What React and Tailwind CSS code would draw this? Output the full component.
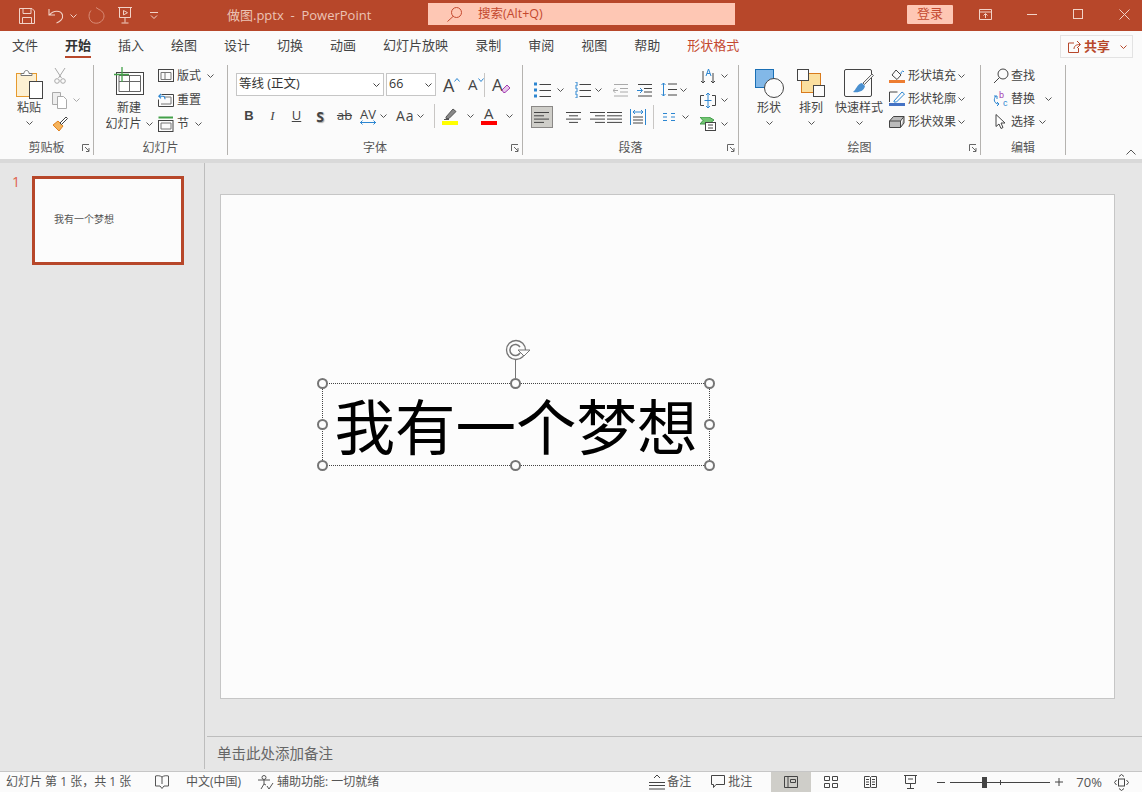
const TABS = ["文件", "开始", "插入", "绘图", "设计", "切换", "动画", "幻灯片放映", "录制", "审阅", "视图", "帮助"];

function Chev({ c = "#555", className = "" }) {
  return (
    <svg width="7" height="4" viewBox="0 0 7 4" className={`shrink-0 ${className}`}>
      <path d="M.5.5l3 3 3-3" fill="none" stroke={c} />
    </svg>
  );
}

function Ico({ w = 16, h = 16, children, className = "" }) {
  return (
    <svg width={w} height={h} viewBox={`0 0 ${w} ${h}`} fill="none" className={`shrink-0 ${className}`}>
      {children}
    </svg>
  );
}

function Launcher() {
  return (
    <Ico w={8} h={8} className="absolute right-[3px] top-[4px]">
      <path d="M.5 7V.5H7M3 3l4 4M7 4v3.5H4" stroke="#666" />
    </Ico>
  );
}

function Group({ w, label, launcher, children }) {
  return (
    <div className={`flex flex-col h-[90px] shrink-0 border-r border-[#b5b3b0] ${w}`}>
      <div className="flex h-[75px]">{children}</div>
      <div className="relative h-[15px] flex items-center justify-center text-[12px] leading-none text-[#555]">
        {label}
        {launcher ? <Launcher /> : null}
      </div>
    </div>
  );
}

function Big({ w, icon, lines, chev = true }) {
  return (
    <div className={`flex flex-col items-center shrink-0 ${w}`}>
      <div className="h-[35px] pt-[4px] flex justify-center">{icon}</div>
      {lines.map((l, i) => (
        <div key={i} className="h-[16px] flex items-center text-[12px] leading-none whitespace-nowrap">{l}</div>
      ))}
      {chev ? <div className="h-[14px] flex items-center"><Chev /></div> : null}
    </div>
  );
}

function Small({ icon, label, gap = "mr-[3px]", chev = "ml-[6px]", h = "h-[24px]" }) {
  return (
    <div className={`flex items-center text-[12px] leading-none whitespace-nowrap ${h}`}>
      <span className={`flex ${gap}`}>{icon}</span>
      {label}
      {chev ? <Chev className={chev} /> : null}
    </div>
  );
}

function Lines({ rows, c = "#444" }) {
  return (
    <Ico w={16} h={13}>
      {rows.map(([a, b], i) => (
        <path key={i} d={`M${a} ${1.5 + i * 3.3}H${b}`} stroke={c} />
      ))}
    </Ico>
  );
}

function PasteIcon() {
  return (
    <Ico w={30} h={30}>
      <rect x="2.5" y="4.5" width="20" height="23" fill="#fdf0d2" stroke="#e69a2e" />
      <path d="M7 6.5V4.5h3c0-4 5-4 5 0h3v2z" fill="#fff" stroke="#777" />
      <rect x="15.5" y="12.5" width="13" height="17" fill="#fff" stroke="#444" />
    </Ico>
  );
}

function NewSlideIcon() {
  return (
    <Ico w={30} h={28}>
      <rect x="2.5" y="5.5" width="27" height="22" stroke="#444" fill="#fff" />
      <path d="M5 8.5h21.5v16H5zM15.5 8.5v16M5 14.5h21.5" stroke="#666" />
      <path d="M8 0v15M0 7.5h15" stroke="#43a049" strokeWidth="1.3" />
    </Ico>
  );
}

function SlideTitle() {
  return (
    <Ico w={16} h={14}>
      <rect x=".5" y=".5" width="15" height="12" stroke="#444" />
      <path d="M3 3.5h10M3 3.5v7h10v-7M7 3.5v7" stroke="#777" />
    </Ico>
  );
}

function ResetIcon() {
  return (
    <Ico w={16} h={14}>
      <path d="M3.5 1.5h12v12H.5v-7" stroke="#444" />
      <path d="M6 4h7v7H3" stroke="#777" />
      <path d="M3 1L.8 3.2 3 5.4M1 3.2h4c1.5 0 2 1 2 3" stroke="#2c86d1" strokeWidth="1.1" />
    </Ico>
  );
}

function SectionIcon() {
  return (
    <Ico w={16} h={16}>
      <path d="M.5 1.5h14.5" stroke="#43a049" strokeWidth="2" />
      <rect x=".5" y="4.5" width="14.5" height="11" stroke="#444" />
      <path d="M3 7h10v6H3z" stroke="#777" />
    </Ico>
  );
}

function Bullets({ numbered }) {
  return (
    <Ico w={17} h={16}>
      {[2, 8, 14].map((y) => (
        <g key={y}>
          {numbered ? (
            <path d={`M1 ${y - 2}h2v4H1`} stroke="#2c86d1" />
          ) : (
            <rect x="0" y={y - 1.5} width="3" height="3" fill="#2c86d1" />
          )}
          <path d={`M5.5 ${y + 0.5}H17`} stroke="#444" />
        </g>
      ))}
    </Ico>
  );
}

function Indent({ out }) {
  const c = out ? "#aaa" : "#444";
  return (
    <Ico w={15} h={14}>
      <path d="M1 1.5h14M7 5.5h8M7 9h8M1 13h14" stroke={c} />
      <path d={out ? "M5 7.5H0M2.5 5L0 7.5 2.5 10" : "M0 7.5h5M3 5l2.5 2.5L3 10"} stroke={out ? "#aaa" : "#2c86d1"} />
    </Ico>
  );
}

function AlignIcon({ rows }) {
  return <Lines rows={rows} />;
}

function Sep() {
  return <div className="w-px h-[24px] bg-[#c8c6c4] shrink-0" />;
}

function Titlebar() {
  const ic = "#f2d3c8";
  return (
    <div className="flex items-center h-[31px] bg-[#b7472a] shrink-0 text-[13px] text-[#ecc3b5]">
      <Ico w={16} h={16} className="ml-[19px]">
        <path d="M.5.5h12.5l2.5 2.5v12.5H.5zM4 .5v5h8v-5M3.5 15.5v-6h9v6" stroke={ic} />
      </Ico>
      <Ico w={16} h={16} className="ml-[13px]">
        <path d="M1 1v6h6M1.5 7C5 2 13 2 14.5 7c1 4-3 7-6 8" stroke={ic} strokeWidth="1.1" />
      </Ico>
      <Chev c={ic} className="ml-[6px]" />
      <Ico w={17} h={17} className="ml-[11px]">
        <path d="M11 2.5C15 4 17 8 15.5 11.5 13.500 16 8 17.500 4 15 .5 12.500 0 7 3 3.500M8 .5L11 2.500" stroke="#d98d78" />
      </Ico>
      <Ico w={14} h={17} className="ml-[13px]">
        <path d="M0 .5h14M1.500.5v10h11V.5M7 10.500v5M3.500 16h7" stroke={ic} />
        <path d="M5.500 3.500l4 2.200-4 2.200z" stroke={ic} />
      </Ico>
      <Ico w={8} h={7} className="ml-[18px]">
        <path d="M0 .5h8M1 3.500l3 3 3-3" stroke={ic} />
      </Ico>
      <div className="ml-[69px] w-[201px] whitespace-pre">做图.pptx  -  PowerPoint</div>
      <div className="flex items-center w-[307px] h-[22px] bg-[#fec7b4] text-[#c4492f] text-[12.500px] -mt-[3px]">
        <Ico w={15} h={15} className="ml-[19px]">
          <circle cx="9.500" cy="5.500" r="5" stroke="#c4492f" />
          <path d="M6 9.500L.5 14.500" stroke="#c4492f" />
        </Ico>
        <span className="ml-[16px]">搜索(Alt+Q)</span>
      </div>
      <div className="ml-[172px] flex items-center justify-center w-[46px] h-[19px] rounded-[1px] bg-[#fec7b4] text-[#c4492f] text-[13px] -mt-[3px]">登录</div>
      <Ico w={13} h={11} className="ml-[26px] -mt-[3px]">
        <path d="M.5.5h12v10H.5zM.5 3h12M6.500 9V5M4.500 6.500l2-2 2 2" stroke={ic} />
      </Ico>
      <div className="ml-[35px] w-[10px] h-px bg-[#f2d3c8] -mt-[3px]" />
      <div className="ml-[36px] w-[10px] h-[10px] border border-[#f2d3c8] -mt-[3px]" />
      <Ico w={11} h={11} className="ml-[36px] -mt-[3px]">
        <path d="M.5.500l10 10M10.500.500l-10 10" stroke={ic} />
      </Ico>
    </div>
  );
}

function Tabs() {
  return (
    <div className="flex h-[29px] pl-[12px] bg-[#fbfbfb] shrink-0 text-[13px] leading-none text-[#444] items-center gap-[27px]">
      {TABS.map((t) => (
        <div key={t} className={`relative h-full flex items-center ${t === "开始" ? "font-bold text-[#333]" : ""}`}>
          {t}
          {t === "开始" ? <div className="absolute left-0 right-0 bottom-[2px] h-[2px] bg-[#b7472a]" /> : null}
        </div>
      ))}
      <div className="text-[#c4492f]">形状格式</div>
      <div className="ml-auto mr-[9px] flex items-center w-[73px] h-[23px] border border-[#e3e3e3] text-[#b7472a] font-bold pl-[7px] mt-[2px]">
        <Ico w={13} h={13}>
          <path d="M6 3H.5v9.500h10V8M6 9c0-3 2-4.500 6-4.500M9 1l3.500 3.500L9 8" stroke="#b7472a" />
        </Ico>
        <span className="ml-[3px]">共享</span>
        <Chev c="#b7472a" className="ml-[10px]" />
      </div>
    </div>
  );
}

function Ribbon() {
  return (
    <div className="relative flex h-[99px] pt-[5px] bg-[#fbfbfb] text-[#444] shrink-0">
      <Group w="w-[94px]" label="剪贴板" launcher>
        <Big w="w-[30px] ml-[14px]" icon={<PasteIcon />} lines={["粘贴"]} />
        <div className="ml-[8px] -mt-px flex flex-col">
          <div className="h-[24px] flex items-center pl-[2px]">
            <Ico w={12} h={16}>
              <path d="M1 0l6.500 10M11 0L4.500 10" stroke="#a8a8a8" />
              <circle cx="3" cy="13" r="2.300" stroke="#a8a8a8" />
              <circle cx="9" cy="13" r="2.300" stroke="#a8a8a8" />
            </Ico>
          </div>
          <div className="h-[24px] flex items-center">
            <Ico w={16} h={17}>
              <path d="M.5.500h8v12h-8z" fill="#eee" stroke="#aaa" />
              <path d="M5.500 4.500h6l3 3v9h-9z" fill="#fff" stroke="#aaa" />
            </Ico>
            <Chev c="#aaa" className="ml-[5px]" />
          </div>
          <div className="h-[24px] flex items-center">
            <Ico w={16} h={16}>
              <path d="M1 9l5-4 5 5-4 5C5 13 3 11 1 9z" fill="#f5b35c" stroke="#e0811f" />
              <path d="M8 7l6-6 1.500 1.500-6 6z" fill="#fff" stroke="#444" />
            </Ico>
          </div>
        </div>
      </Group>

      <Group w="w-[134px]" label="幻灯片">
        <div className="ml-[10px] w-[50px] flex flex-col items-center shrink-0">
          <div className="h-[35px] pt-[2px] flex"><NewSlideIcon /></div>
          <div className="h-[16px] flex items-center text-[12px] leading-none">新建</div>
          <div className="h-[16px] flex items-center text-[12px] leading-none whitespace-nowrap">幻灯片<Chev className="ml-[4px]" /></div>
        </div>
        <div className="ml-[4px] -mt-px flex flex-col">
          <Small icon={<SlideTitle />} label="版式" />
          <Small icon={<ResetIcon />} label="重置" chev={null} />
          <Small icon={<SectionIcon />} label="节" />
        </div>
      </Group>

      <Group w="w-[295px]" label="字体" launcher>
        <div className="pl-[8px] pt-[8px] flex flex-col">
          <div className="flex items-center h-[23px]">
            <div className="flex items-center justify-between w-[148px] h-full border border-[#c6c6c6] bg-white px-[2px] text-[12.500px] text-[#333]">
              等线 (正文)<Chev c="#444" className="mr-[1px]" />
            </div>
            <div className="ml-[2px] flex items-center justify-between w-[50px] h-full border border-[#c6c6c6] bg-white px-[2px] text-[12.500px] text-[#333]">
              66<Chev c="#444" className="mr-[1px]" />
            </div>
            <div className="ml-[7px] flex items-start w-[17px] text-[18px] leading-none">A<Ico w={6} h={4} className="mt-[2px]"><path d="M.5 3.500l2.500-3 2.500 3" stroke="#2c86d1" /></Ico></div>
            <div className="ml-[8px] flex items-start w-[16px] text-[15px] leading-none">A<Ico w={6} h={4} className="mt-[1px]"><path d="M.5.500l2.500 3 2.500-3" stroke="#2c86d1" /></Ico></div>
            <Sep />
            <div className="ml-[7px] flex items-end text-[17px] leading-none">
              A
              <Ico w={10} h={9} className="-ml-[2px]"><path d="M1 6l5-5 3 3-5 4.500H2.500z" fill="#e8c8ec" stroke="#a43cb0" /></Ico>
            </div>
          </div>
          <div className="mt-[8px] h-[24px] flex items-center text-[#444]">
            <div className="w-[22px] ml-[2px] text-center text-[13px] font-bold font-['Liberation_Sans',sans-serif]">B</div>
            <div className="w-[25px] text-center text-[13px] italic font-['Liberation_Serif',serif]">I</div>
            <div className="w-[23px] text-center text-[13px] underline">U</div>
            <div className="w-[24px] text-center text-[14px] font-bold [text-shadow:1px_1px_1px_#aaa]">S</div>
            <div className="w-[25px] text-center text-[13px] line-through">ab</div>
            <div className="w-[22px] flex flex-col items-center leading-none">
              <span className="text-[13px] h-[12px] leading-[12px]">AV</span>
              <Ico w={16} h={5}><path d="M0 2.500h16M2.500.500l-2 2 2 2M13.500.500l2 2-2 2" stroke="#2c86d1" /></Ico>
            </div>
            <Chev className="ml-[1px]" />
            <div className="ml-[9px] text-[14px] tracking-[1px] leading-none">Aa</div>
            <Chev className="ml-[2px]" />
            <div className="ml-[10px]"><Sep /></div>
            <div className="ml-[7px] flex flex-col w-[16px]">
              <Ico w={16} h={12}><path d="M4 9l7-8 3 2.500-7 7H4zM2 11.500h5" fill="#888" stroke="#555" /></Ico>
              <div className="mt-[1px] h-[4px] bg-[#ffff00]" />
            </div>
            <Chev className="ml-[9px]" />
            <div className="ml-[7px] flex flex-col items-center w-[16px]">
              <span className="text-[15px] h-[13px] leading-[13px]">A</span>
              <div className="mt-[1px] w-full h-[4px] bg-[#ff0000]" />
            </div>
            <Chev className="ml-[9px]" />
          </div>
        </div>
      </Group>

      <Group w="w-[216px]" label="段落" launcher>
        <div className="pl-[8px] flex flex-col w-[175px] shrink-0">
          <div className="h-[39px] pt-[10px] flex items-center pl-[3px]">
            <Bullets />
            <Chev className="ml-[6px]" />
            <span className="ml-[10px] flex"><Bullets numbered /></span>
            <Chev className="ml-[4px]" />
            <span className="ml-[11px] flex"><Indent out /></span>
            <span className="ml-[9px] flex"><Indent /></span>
            <Ico w={24} h={15} className="ml-[9px]">
              <path d="M2.500 1v13M.5 3l2-2 2 2M.5 12l2 2 2-2" stroke="#2c86d1" />
              <path d="M7 2h9M7 7.500h9M7 13h9" stroke="#444" />
            </Ico>
            <Chev className="-ml-[5px]" />
          </div>
          <div className="mt-px h-[24px] flex items-center">
            <div className="flex items-center justify-center w-[22px] h-[22px] bg-[#cfcec9] border border-[#8a8886]">
              <AlignIcon rows={[[0, 15], [0, 10], [0, 15], [0, 10]]} />
            </div>
            <span className="ml-[13px] flex"><AlignIcon rows={[[0, 15], [3, 12], [0, 15], [3, 12]]} /></span>
            <span className="ml-[8px] flex"><AlignIcon rows={[[0, 15], [5, 15], [0, 15], [5, 15]]} /></span>
            <span className="ml-[1px] flex"><AlignIcon rows={[[0, 15], [0, 15], [0, 15], [0, 15]]} /></span>
            <Ico w={16} h={16} className="ml-[7px]">
              <path d="M.5 0v16M15.500 0v16" stroke="#2c86d1" />
              <path d="M3 3h10M5 1L3 3l2 2M11 1l2 2-2 2" stroke="#2c86d1" />
              <path d="M3 8h10M3 11h10M3 14h10" stroke="#444" />
            </Ico>
            <span className="ml-[7px] flex"><Sep /></span>
            <Ico w={12} h={8} className="ml-[9px]">
              <path d="M0 .5h4M8 .5h4M0 4h4M8 4h4M0 7.500h4M8 7.500h4" stroke="#2c86d1" />
            </Ico>
            <Chev className="ml-[7px]" />
          </div>
        </div>
        <div className="-mt-px flex flex-col ml-[2px]">
          <div className="h-[24px] flex items-center">
            <Ico w={16} h={17}>
              <path d="M3 3v12M1 13l2 2 2-2M13 5v10M11 13l2 2 2-2" stroke="#444" />
              <path d="M6 8l2.500-7L11 8M7 5.500h3" stroke="#2c86d1" />
            </Ico>
            <Chev className="ml-[5px]" />
          </div>
          <div className="h-[24px] flex items-center">
            <Ico w={16} h={15}>
              <path d="M4 2.500H.5v10H4M12 2.500h3.500v10H12" stroke="#444" />
              <path d="M8 0v15M6 2l2-2 2 2M6 13l2 2 2-2M4.500 7.500h7" stroke="#2c86d1" />
            </Ico>
            <Chev className="ml-[5px]" />
          </div>
          <div className="h-[24px] flex items-center">
            <Ico w={16} h={14}>
              <path d="M0 0h9l5 3-5 4H0l3-3.500z" fill="#72c472" stroke="#3f9a48" />
              <rect x="5.500" y="5.500" width="10" height="8" fill="#fff" stroke="#444" />
              <path d="M8 8h5M8 11h5" stroke="#444" />
            </Ico>
            <Chev className="ml-[5px]" />
          </div>
        </div>
      </Group>

      <Group w="w-[242px]" label="绘图" launcher>
        <Big
          w="w-[30px] ml-[15px]"
          lines={["形状"]}
          icon={
            <Ico w={29} h={30}>
              <rect x=".5" y=".5" width="18" height="18" fill="#82b8e8" stroke="#1a6fb5" />
              <circle cx="19" cy="19" r="9.500" fill="#fcfcfc" stroke="#444" />
            </Ico>
          }
        />
        <Big
          w="w-[30px] ml-[12px]"
          lines={["排列"]}
          icon={
            <Ico w={29} h={30}>
              <rect x="4.500" y="4.500" width="19" height="19" fill="#fbdf9f" stroke="#d97b1c" />
              <rect x=".5" y=".5" width="11" height="11" fill="#fcfcfc" stroke="#444" />
              <rect x="16.500" y="16.500" width="11" height="11" fill="#fcfcfc" stroke="#444" />
            </Ico>
          }
        />
        <Big
          w="w-[48px] ml-[9px]"
          lines={["快速样式"]}
          icon={
            <Ico w={30} h={30}>
              <rect x=".5" y=".5" width="27" height="27" rx="1.500" fill="#fcfcfc" stroke="#444" />
              <path d="M19 14l9-9 1.500 1.500-9 9z" fill="#eee" stroke="#666" />
              <path d="M18 14l3 3c-1 5-6 7-12 6 3-2 4-8 9-9z" fill="#4a90d0" />
            </Ico>
          }
        />
        <div className="ml-[6px] -mt-[1px] flex flex-col">
          <Small
            h="h-[23px]"
            gap="mr-[3px]"
            chev="ml-[2px]"
            label="形状填充"
            icon={
              <span className="flex flex-col w-[16px]">
                <Ico w={16} h={11}><path d="M3 6l4-5 5 5-4 4.500z" stroke="#444" /><path d="M12 5c0-2 1-3 2-3l1 1" stroke="#2c86d1" /></Ico>
                <span className="h-[3px] bg-[#ed7d31]" />
              </span>
            }
          />
          <Small
            h="h-[23px]"
            gap="mr-[3px]"
            chev="ml-[2px]"
            label="形状轮廓"
            icon={
              <span className="flex flex-col w-[16px]">
                <Ico w={16} h={12}><path d="M.5 11V1h8" stroke="#444" /><path d="M5 10l8-9 2.500 2-8 8H5z" stroke="#2c86d1" /></Ico>
                <span className="h-[3px] bg-[#4472c4]" />
              </span>
            }
          />
          <Small
            h="h-[23px]"
            gap="mr-[3px]"
            chev="ml-[2px]"
            label="形状效果"
            icon={
              <Ico w={16} h={12}>
                <path d="M.5 5l4-4.500H15L11.500 5zM.5 5v6.500h11V5M11.500 11.500L15 7V.5" fill="#bbb" stroke="#444" />
              </Ico>
            }
          />
        </div>
      </Group>

      <Group w="w-[85px]" label="编辑">
        <div className="ml-[12px] -mt-[1px] flex flex-col">
          <Small
            h="h-[23px]"
            gap="mr-[2px]"
            chev={null}
            label="查找"
            icon={
              <Ico w={16} h={16}>
                <circle cx="10" cy="6" r="5" stroke="#444" />
                <path d="M6.500 9.500L1 15" stroke="#444" />
              </Ico>
            }
          />
          <Small
            h="h-[23px]"
            gap="mr-[2px]"
            chev="ml-[10px]"
            label="替换"
            icon={
              <Ico w={16} h={16}>
                <text x="6" y="7" fontSize="9" fill="#a43cb0" fontFamily="Liberation Sans">b</text>
                <text x="10" y="15" fontSize="9" fill="#2c86d1" fontFamily="Liberation Sans">c</text>
                <path d="M3 5C0 8 1 13 6 13M1 5h3V8M6 13l-2-2M6 13l-2 2" stroke="#2c86d1" />
              </Ico>
            }
          />
          <Small
            h="h-[23px]"
            gap="mr-[2px]"
            chev="ml-[4px]"
            label="选择"
            icon={
              <Ico w={16} h={16}>
                <path d="M3 .5v12l3-2.500 2 4.500 2-1-2-4.500h4z" fill="#fff" stroke="#444" />
              </Ico>
            }
          />
        </div>
      </Group>

      <Ico w={10} h={6} className="absolute right-[6px] bottom-[4px]">
        <path d="M.5 5.500L5 1l4.500 4.500" stroke="#555" />
      </Ico>
    </div>
  );
}

const HANDLES = [
  "left-[-6px] top-[-6px]",
  "left-[187px] top-[-6px]",
  "left-[381px] top-[-6px]",
  "left-[-6px] top-[35px]",
  "left-[381px] top-[35px]",
  "left-[-6px] top-[76px]",
  "left-[187px] top-[76px]",
  "left-[381px] top-[76px]",
];

function Slide() {
  return (
    <div className="relative w-[895px] h-[505px] bg-[#fcfcfc] border border-[#c6c6c6]">
      <div className="absolute left-[101px] top-[188px] w-[388px] h-[83px] border border-dotted border-[#444] flex items-center justify-center text-black text-[60.500px] leading-none whitespace-nowrap font-['Noto_Sans_CJK_SC',sans-serif]">
        我有一个梦想
        {HANDLES.map((h) => (
          <span key={h} className={`absolute w-[11px] h-[11px] rounded-full bg-[#fcfcfc] border-2 border-[#757575] ${h}`} />
        ))}
        <span className="absolute left-[192px] top-[-24px] w-px h-[18px] bg-[#757575]" />
        <Ico w={26} h={22} className="absolute left-[182px] top-[-45px]">
          <circle cx="11" cy="11" r="9.500" stroke="#757575" strokeWidth="1.300" />
          <path d="M15 8a5.500 5.500 0 1 0 0 6" stroke="#757575" strokeWidth="1.500" />
          <path d="M13 11h12l-6 6z" fill="#fcfcfc" stroke="#757575" />
        </Ico>
      </div>
    </div>
  );
}

function StatusBar() {
  return (
    <div className="flex items-center h-[21px] bg-[#fbfbfb] border-t border-[#c6c6c6] text-[12px] leading-none text-[#555] whitespace-pre shrink-0">
      <span className="ml-[6px] w-[130px]">幻灯片 第 1 张，共 1 张</span>
      <Ico w={14} h={14} className="ml-[19px]">
        <path d="M7 2C5 .5 2.500.5.5 1v10h4.500l2 2.500 2-2.500h4.500V1c-2-.5-4.500-.5-6.500 1zM7 2v7" stroke="#555" />
      </Ico>
      <span className="ml-[17px] w-[55px]">中文(中国)</span>
      <Ico w={16} h={15} className="ml-[17px]">
        <circle cx="6" cy="2.500" r="2" stroke="#555" />
        <path d="M0 5h12M6 5v4l-3 5M6 9l2 1M9 11l2 3 4-6" stroke="#555" />
      </Ico>
      <span className="ml-[3px]">辅助功能: 一切就绪</span>

      <Ico w={16} h={16} className="ml-[270px]">
        <path d="M0 8.500h16M0 11.500h16M0 15h16M5 4l3-3 3 3" stroke="#444" />
      </Ico>
      <span className="ml-[2px]">备注</span>
      <Ico w={14} h={14} className="ml-[20px]">
        <path d="M.5.500h13v9H5l-2.500 3v-3h-2z" stroke="#444" />
      </Ico>
      <span className="ml-[3px]">批注</span>
      <div className="ml-[19px] w-[40px] h-full bg-[#cfcec9] flex items-center justify-center">
        <Ico w={14} h={12}>
          <path d="M.5.500h13v11H.5zM4 .500v11M6.500 3.500h5v3h-5z" stroke="#444" />
        </Ico>
      </div>
      <Ico w={14} h={12} className="ml-[13px]">
        <path d="M.5.500h5v4h-5zM8.500.500h5v4h-5zM.5 7.500h5v4h-5zM8.500 7.500h5v4h-5z" stroke="#444" />
      </Ico>
      <Ico w={13} h={12} className="ml-[26px]">
        <path d="M.5.500h5l1 1 1-1h5v11h-5l-1-.5-1 .5h-5zM6.500 1.500V11M2 3.500h3M2 6h3M2 8.500h3M8 3.500h3M8 6h3M8 8.500h3" stroke="#444" />
      </Ico>
      <Ico w={13} h={14} className="ml-[27px]">
        <path d="M0 .5h13M1.500.5v8h10v-8M6.500 8.500v4.500M3 13.500h7M4 4h5" stroke="#444" />
      </Ico>
      <span className="ml-[20px] w-[8px] h-px bg-[#444]" />
      <div className="ml-[5px] relative w-[100px] h-px bg-[#444] flex items-center">
        <span className="absolute left-[32px] w-[5px] h-[11px] bg-[#444]" />
        <span className="absolute left-[50px] w-px h-[5px] bg-[#444]" />
      </div>
      <Ico w={8} h={8} className="ml-[5px]">
        <path d="M0 4h8M4 0v8" stroke="#444" />
      </Ico>
      <span className="ml-[13px] text-[13px]">70%</span>
      <Ico w={15} h={17} className="ml-[12px]">
        <rect x="4.500" y="5" width="6" height="7" stroke="#444" />
        <path d="M5 2.500L7.500.5 10 2.500M5 14.500l2.500 2 2.500-2M2.500 6L.5 8.500l2 2.500M12.500 6l2 2.500-2 2.500" stroke="#444" />
      </Ico>
    </div>
  );
}

export default function App() {
  return (
    <div className="flex flex-col w-[1142px] h-[792px] overflow-hidden bg-[#e6e6e6] font-['Open_Sans','Noto_Sans_CJK_SC',sans-serif]">
      <Titlebar />
      <Tabs />
      <Ribbon />
      <div className="h-[4px] bg-[#d9d9d9] shrink-0" />
      <div className="flex flex-1 min-h-0">
        <div className="flex w-[205px] shrink-0 h-[606px] border-r border-[#bdbdbd] pt-[13px]">
          <span className="ml-[12px] w-[20px] text-[14px] leading-[14px] mt-[-1px] text-[#e0604a]">1</span>
          <div className="w-[152px] h-[89px] border-[3px] border-[#b7472a] bg-[#fcfcfc] pl-[19px] pt-[34px] text-[10px] leading-[12px] text-[#555] font-['Noto_Sans_CJK_SC',sans-serif]">
            我有一个梦想
          </div>
        </div>
        <div className="flex flex-col flex-1 min-w-0 pl-[2px]">
          <div className="flex-1 pl-[13px] pt-[31px]"><Slide /></div>
          <div className="h-[35px] border-t border-[#bdbdbd] pl-[10px] flex items-center text-[14.500px] leading-none text-[#666]">
            单击此处添加备注
          </div>
        </div>
      </div>
      <StatusBar />
    </div>
  );
}
